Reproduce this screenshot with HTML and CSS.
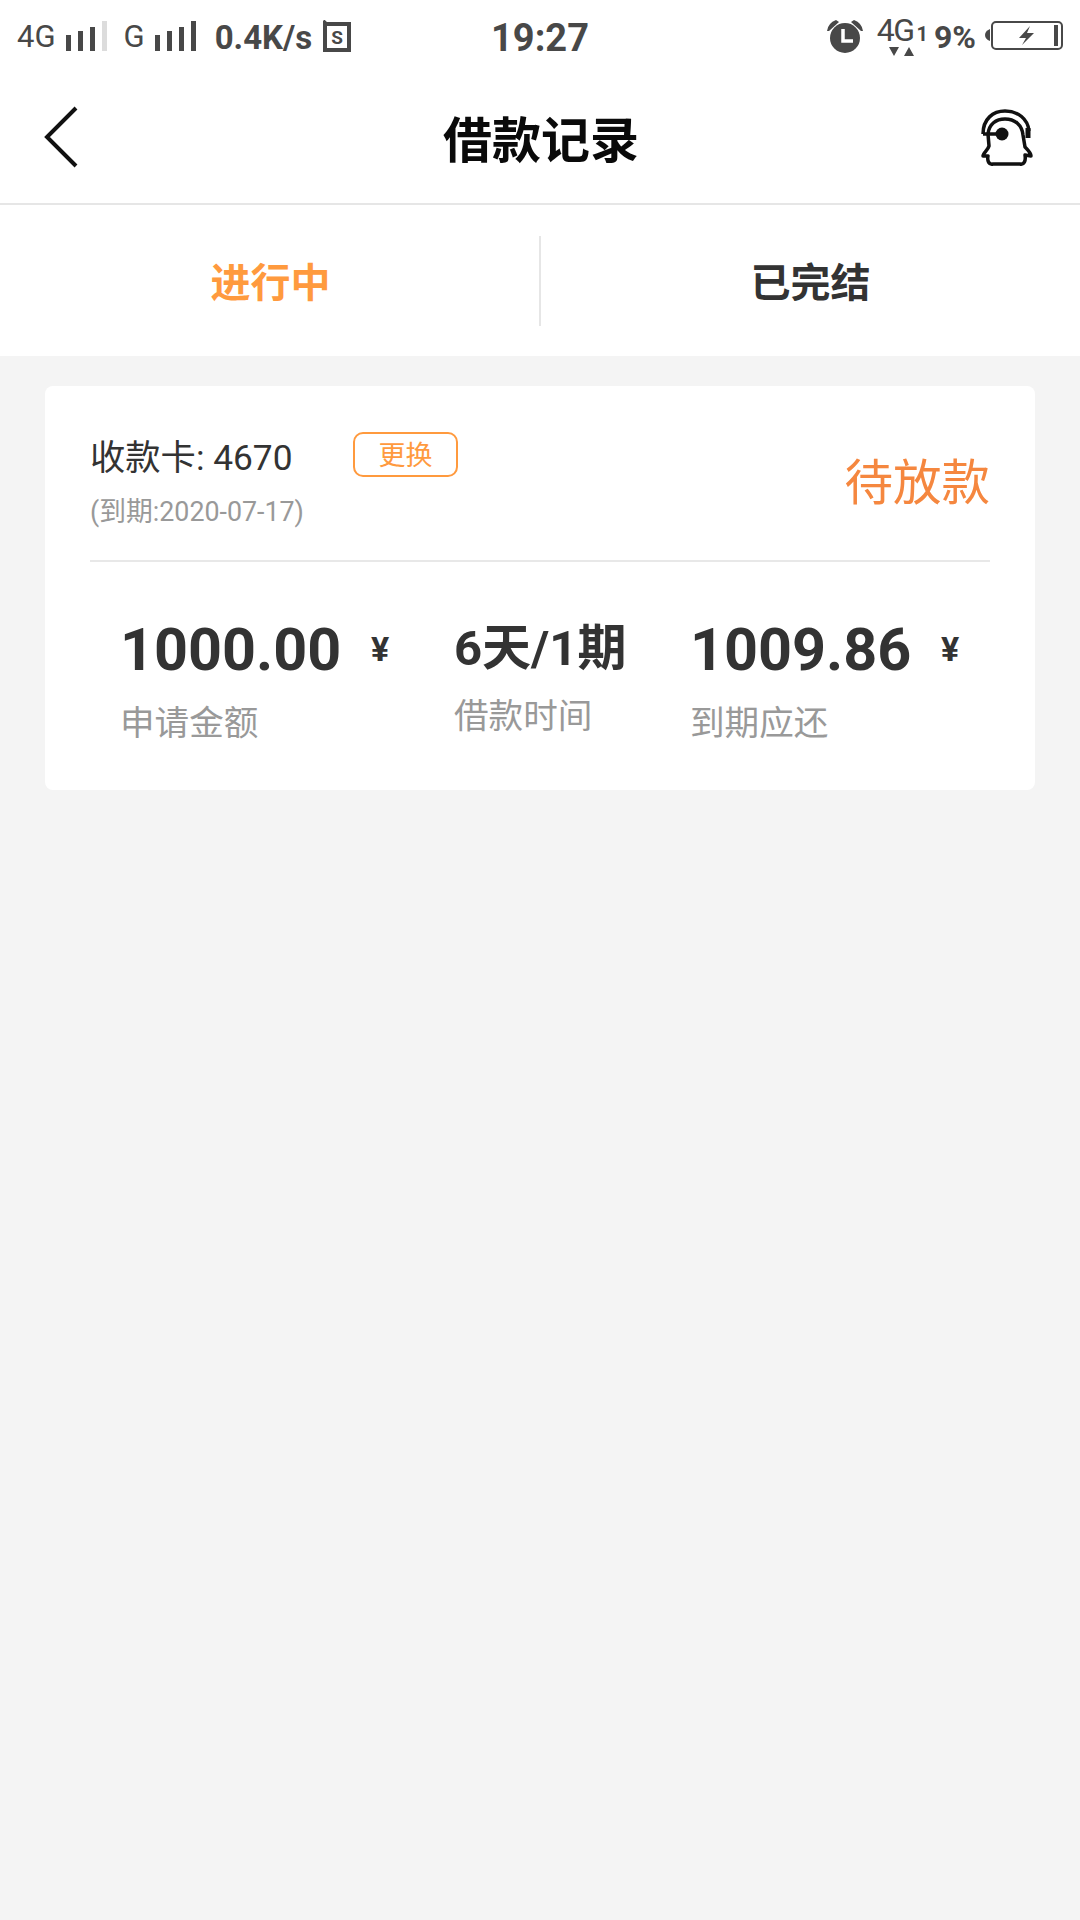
FILE: index.html
```html
<!DOCTYPE html>
<html lang="zh-CN">
<head>
  <meta charset="UTF-8">
  <title>借款记录</title>
  <link rel="stylesheet" href="styles.css">
</head>
<body>

  <div class="status-bar">
    <div class="status-left">
      <span class="net net-4g">4G</span>
      <svg class="signal" width="41" height="30" viewBox="0 0 41 30">
        <rect x="0" y="14" width="5" height="16" fill="#484848"/>
        <rect x="12" y="10" width="5" height="20" fill="#484848"/>
        <rect x="24" y="6" width="5" height="24" fill="#484848"/>
        <rect x="36" y="0" width="5" height="30" fill="#dcdcdc"/>
      </svg>
      <span class="net net-g">G</span>
      <svg class="signal" width="41" height="30" viewBox="0 0 41 30">
        <rect x="0" y="14" width="5" height="16" fill="#484848"/>
        <rect x="12" y="10" width="5" height="20" fill="#484848"/>
        <rect x="24" y="6" width="5" height="24" fill="#484848"/>
        <rect x="36" y="0" width="5" height="30" fill="#484848"/>
      </svg>
      <span class="speed">0.4K/s</span>
      <svg class="sim" width="28" height="32" viewBox="0 0 28 32">
        <path d="M0 1 L3 4 H26 V30 H2 V2" fill="none" stroke="#484848" stroke-width="4"/>
        <text x="14" y="24" class="sim-s">S</text>
      </svg>
    </div>
    <div class="status-time">19:27</div>
    <div class="status-right">
      <svg class="alarm" width="36" height="33" viewBox="0 0 36 33">
        <circle cx="18" cy="18" r="15" fill="#484848"/>
        <path d="M0 11 Q1 3 9 0 L12 2 L2 11 Z M36 11 Q35 3 27 0 L24 2 L34 11 Z" fill="#484848"/>
        <path d="M16 9 V21 H26" fill="none" stroke="#fff" stroke-width="3.5"/>
      </svg>
      <div class="net-dual">
        <div class="net-dual-top"><span class="net-big">4G</span><span class="net-one">1</span></div>
        <svg class="net-arrows" width="25" height="10" viewBox="0 0 25 10">
          <path d="M0 0 H10 L5 9 Z M15 9 H25 L20 0 Z" fill="#484848"/>
        </svg>
      </div>
      <span class="battery-pct">9%</span>
      <svg class="battery" width="78" height="34" viewBox="0 0 78 34">
        <path d="M5 10 Q0 12 0 16 Q0 20 5 22 Z" fill="#484848"/>
        <rect x="7" y="3" width="70" height="27" rx="4" fill="none" stroke="#484848" stroke-width="2"/>
        <rect x="69" y="6" width="4" height="21" fill="#484848"/>
        <path d="M45 7 L34 19 H41 L37 26 L49 14 H42 Z" fill="#484848"/>
      </svg>
    </div>
  </div>

  <header class="nav-bar">
    <svg class="nav-back" width="36" height="62" viewBox="0 0 36 62">
      <path d="M33 2 L4 31 L33 60" fill="none" stroke="#111" stroke-width="4"/>
    </svg>
    <h1 class="nav-title">借款记录</h1>
    <svg class="nav-service" width="54" height="60" viewBox="20 16 54 60">
      <path d="M23 43 C23 28 33 20 45 20 C58 20 68 28 69 40" fill="none" stroke="#111" stroke-width="3.5"/>
      <path d="M28 43 C29 33 36 28 45 28 C55 28 62 34 63 44 L65 56 C69 60 71 63 71 65 L65 64 C66 70 64 74 60 73 L33 73 C29 74 27 70 28 65 L23 65 C23 62 28 59 29 55 Z" fill="#fff" stroke="#111" stroke-width="3.5" stroke-linejoin="round"/>
      <path d="M23 43 H40" stroke="#111" stroke-width="3.5"/>
      <circle cx="42" cy="43" r="6.5" fill="#111"/>
      <path d="M68 37 V47" stroke="#111" stroke-width="5"/>
    </svg>
  </header>

  <div class="tabs">
    <div class="tab tab-active">进行中</div>
    <div class="tab">已完结</div>
  </div>

  <main class="content">
    <div class="loan-card">
      <div class="card-top">
        <div class="card-info">
          <div class="card-line">
            <span class="card-number">收款卡: 4670</span>
            <span class="change-btn">更换</span>
          </div>
          <div class="card-due">(到期:2020-07-17)</div>
        </div>
        <div class="card-status">待放款</div>
      </div>

      <div class="stats">
        <div class="stat">
          <div class="stat-value"><span class="amount">1000.00</span><span class="yen">¥</span></div>
          <div class="stat-label">申请金额</div>
        </div>
        <div class="stat stat-mid">
          <div class="stat-term">6天/1期</div>
          <div class="stat-label">借款时间</div>
        </div>
        <div class="stat">
          <div class="stat-value"><span class="amount">1009.86</span><span class="yen">¥</span></div>
          <div class="stat-label">到期应还</div>
        </div>
      </div>
    </div>
  </main>

</body>
</html>
```

FILE: styles.css
```css
* {
  box-sizing: border-box;
}

body {
  margin: 0;
  width: 1080px;
  height: 1920px;
  overflow: hidden;
  font-family: Roboto, "Noto Sans CJK SC", sans-serif;
  background-color: #f4f4f4;
  color: #333;
}

.status-bar {
  display: flex;
  justify-content: space-between;
  align-items: center;
  position: relative;
  height: 70px;
  padding: 2px 17px 0 17px;
  background: white;
  color: #484848;
}

.status-left,
.status-right {
  display: flex;
  align-items: center;
}

.net {
  font-size: 31px;
}

.net-4g {
  margin-right: 10px;
}

.net-g {
  margin: 0 10px 0 17px;
}

.speed {
  width: 97px;
  font-size: 33px;
  font-weight: 700;
  margin: 2px 11px 0 19px;
  white-space: nowrap;
}

.sim-s {
  font-size: 19px;
  font-weight: 700;
  text-anchor: middle;
  fill: #484848;
}

.status-time {
  position: absolute;
  left: 0;
  right: 0;
  margin-top: 3px;
  text-align: center;
  font-size: 38px;
  font-weight: 700;
}

.alarm {
  margin-right: 14px;
}

.net-dual {
  display: flex;
  flex-direction: column;
  margin-right: 6px;
}

.net-dual-top {
  display: flex;
  align-items: baseline;
  height: 29px;
  line-height: 29px;
}

.net-big {
  font-size: 32px;
  letter-spacing: -1.5px;
}

.net-one {
  font-size: 20px;
  font-weight: 700;
  margin-left: 3px;
}

.net-arrows {
  margin: 2px 0 0 12px;
}

.battery-pct {
  width: 41px;
  margin: 2px 10px 0 0;
  font-size: 32px;
  font-weight: 700;
}

.nav-bar {
  display: flex;
  justify-content: space-between;
  align-items: center;
  position: relative;
  height: 135px;
  padding: 0 46px 0 43px;
  background: white;
  border-bottom: 2px solid #e6e6e6;
}

.nav-title {
  position: absolute;
  left: 2px;
  right: 0;
  margin: 0;
  text-align: center;
  font-size: 49px;
  font-weight: 700;
  color: #0a0a0a;
}

.tabs {
  display: flex;
  align-items: center;
  height: 151px;
  background: white;
}

.tab {
  flex: 1;
  height: 90px;
  line-height: 96px;
  text-align: center;
  font-size: 40px;
  font-weight: 700;
}

.tab-active {
  text-indent: 2px;
  color: #ff9a3e;
  border-right: 2px solid #e6e6e6;
}

.content {
  padding: 30px 45px;
}

.loan-card {
  height: 404px;
  padding: 0 45px;
  background: white;
  border-radius: 8px;
}

.card-top {
  display: flex;
  justify-content: space-between;
  align-items: center;
  height: 176px;
  padding-top: 12px;
  border-bottom: 2px solid #e8e8e8;
}

.card-line {
  display: flex;
  align-items: center;
}

.card-number {
  width: 263px;
  font-size: 35.3px;
}

.change-btn {
  width: 105px;
  height: 45px;
  line-height: 44px;
  text-align: center;
  font-size: 27px;
  color: #ff9a3e;
  border: 2px solid #ff9a3e;
  border-radius: 10px;
}

.card-due {
  margin-top: 10px;
  font-size: 26.8px;
  color: #999;
}

.card-status {
  margin-top: -1px;
  font-size: 48.5px;
  color: #f5873f;
}

.stats {
  display: grid;
  grid-template-columns: 334px 236px 1fr;
  padding: 52px 0 0 30px;
}

.stat-value {
  display: flex;
  align-items: center;
  height: 70px;
}

.amount {
  width: 251px;
  font-size: 59.3px;
  font-weight: 700;
}

.yen {
  font-size: 34px;
  font-weight: 700;
}

.stat-term {
  height: 70px;
  line-height: 70px;
  font-size: 49px;
  font-weight: 700;
}

.stat-label {
  margin-top: 11px;
  font-size: 34.6px;
  color: #999;
}

.stat-mid .stat-label {
  margin-top: 4px;
}
```
